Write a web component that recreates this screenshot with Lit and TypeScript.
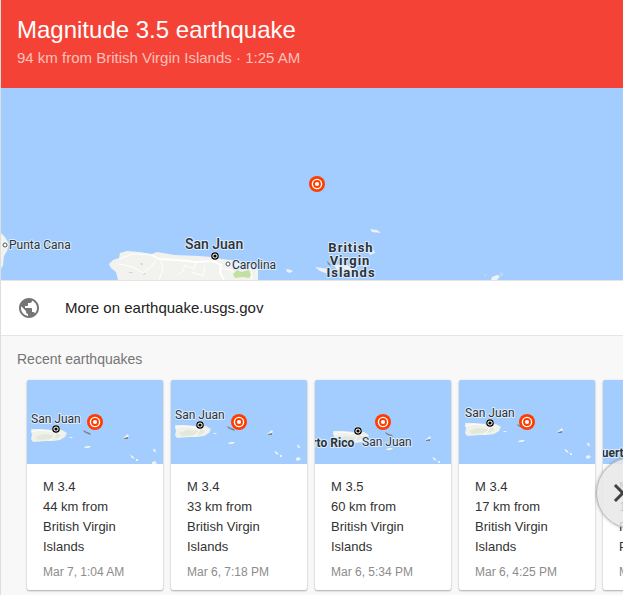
import { LitElement, html, css, svg } from "lit";
import { customElement, property } from "lit/decorators.js";

interface Quake {
  magnitude: string;
  distance: string;
  place: string;
  time: string;
  // Position of the island group and of the city label on the thumbnail.
  islandX: number;
  islandY: number;
  labelX: number;
  labelY: number;
  region: string;
  regionX: number;
  regionY: number;
}

const quakes: Quake[] = [
  { magnitude: "M 3.4", distance: "44 km from", place: "British Virgin Islands", time: "Mar 7, 1:04 AM", islandX: 28, islandY: 49, labelX: 4, labelY: 43, region: "", regionX: 0, regionY: 0 },
  { magnitude: "M 3.4", distance: "33 km from", place: "British Virgin Islands", time: "Mar 6, 7:18 PM", islandX: 28, islandY: 45, labelX: 4, labelY: 39, region: "", regionX: 0, regionY: 0 },
  { magnitude: "M 3.5", distance: "60 km from", place: "British Virgin Islands", time: "Mar 6, 5:34 PM", islandX: 42, islandY: 51, labelX: 47, labelY: 66, region: "Puerto Rico", regionX: -24, regionY: 67 },
  { magnitude: "M 3.4", distance: "17 km from", place: "British Virgin Islands", time: "Mar 6, 4:25 PM", islandX: 30, islandY: 43, labelX: 6, labelY: 37, region: "", regionX: 0, regionY: 0 },
  { magnitude: "M 3.0", distance: "16 km from", place: "Fajardo, Puerto Rico", time: "Mar 6, 2:10 PM", islandX: 90, islandY: 65, labelX: 70, labelY: 60, region: "Puerto Rico", regionX: -9, regionY: 77 },
];

const epicentre = (x: number, y: number) => svg`
  <g transform="translate(${x} ${y})">
    <circle r="8" fill="#ff3d00"></circle>
    <circle r="4.6" fill="none" stroke="#fff" stroke-width="1.4"></circle>
    <circle r="2.1" fill="#fff"></circle>
  </g>`;

const capital = (x: number, y: number) => svg`
  <g transform="translate(${x} ${y})">
    <circle r="4.2" fill="#f8f8f8"></circle>
    <circle r="3.2" fill="none" stroke="#000" stroke-width="1.2"></circle>
    <circle r="1.6" fill="#000"></circle>
  </g>`;

const mapText = css`
  svg {
    display: block;
    width: 100%;
  }
  text {
    font-family: Roboto, "Liberation Sans", sans-serif;
    fill: #2b333b;
    stroke: #dcebfb;
    stroke-width: 2px;
    stroke-linejoin: round;
    paint-order: stroke;
  }
`;

@customElement("quake-map")
export class QuakeMap extends LitElement {
  static styles = [
    mapText,
    css`
      :host {
        display: block;
        background: #a3ccff;
      }
      svg {
        height: 192px;
      }
      .city {
        font-size: 14px;
        font-weight: 500;
      }
      .town {
        font-size: 12px;
      }
      .region {
        font-size: 13px;
        font-weight: 700;
        letter-spacing: 1px;
        text-anchor: middle;
      }
    `,
  ];

  render() {
    return html`
      <svg viewBox="0 0 622 192" preserveAspectRatio="xMidYMid slice" role="img" aria-label="Map of the epicentre">
        <path d="M0 145L4 149L8 156L6 163L3 168L2 177L0 181Z" fill="#f2f2ef"></path>
        <path d="M117 192L115 184L110 180L108 176L112 172L118 170L119 165L126 163L139 164L151 166L156 164L174 167L198 168L210 169L221 171L239 173L250 176L257 180L257 192Z" fill="#f2f2ef"></path>
        <g fill="none" stroke="#fff">
          <path d="M151 167L158 171L176 172L196 174L212 173L220 177L219 184L223 192" stroke-width="2"></path>
          <path d="M119 171L131 166L151 167M118 176L132 179L142 185L150 179L155 172M160 173L162 181L158 192M196 173L193 181L184 177L182 183L176 187M204 178L202 188L190 184M218 180L230 182L238 190M250 178L251 192"></path>
        </g>
        <path d="M232 186L236 182L240 184L248 182L250 187L248 190L242 189L234 190Z" fill="#c1e0a1"></path>
        <path d="M139 176l2-1 1 2zM127 185l3-1 2 1zM142 186l3-1-2 2z" fill="#a3ccff"></path>
        <g fill="#edf2f4">
          <path d="M285 181L290 182L292 183L289 185L286 184Z"></path>
          <path d="M314 179L321 180L328 181L333 184L327 186L319 183Z"></path>
          <path d="M333 177L342 176L349 178L354 174L357 178L350 184L337 184Z"></path>
          <path d="M369 141L376 142L380 145L371 144ZM368 165l5-3 1 3-5 2z"></path>
          <path d="M490 192L491 189L496 187L499 188L497 191L496 192Z"></path>
          <path d="M482 186l5 1-3 2z M498 185l3-1 2 2-3 3z" fill="#b8d6fa"></path>
        </g>
        <path d="M326 173l3 3 1 2-3-2zM341 177l6 1M343 181l5 1-1 4-2-3z" fill="#767d80"></path>
        <path d="M335 182l4-2 1 4-4 1z" fill="#dce9b9"></path>
        <circle cx="4" cy="157" r="2" fill="#fff" stroke="#4b5763"></circle>
        <text class="town" x="8" y="161">Punta Cana</text>
        <text class="city" x="184" y="161">San Juan</text>
        ${capital(214, 168)}
        <circle cx="227" cy="176" r="2" fill="#fff" stroke="#4b5763"></circle>
        <text class="town" x="231" y="181">Carolina</text>
        <text class="region" x="350" y="164">British</text>
        <text class="region" x="349" y="177">Virgin</text>
        <text class="region" x="350" y="189">Islands</text>
        ${epicentre(316, 96)}
      </svg>
    `;
  }
}

@customElement("quake-card")
export class QuakeCard extends LitElement {
  static styles = [
    mapText,
    css`
      :host {
        display: block;
        flex: none;
        width: 136px;
        background: #fff;
        border-radius: 2px;
        box-shadow: 0 1px 2px rgba(0, 0, 0, 0.3), 0 0 1px rgba(0, 0, 0, 0.2);
        overflow: hidden;
      }
      svg {
        height: 84px;
        background: #a3ccff;
      }
      .city {
        font-size: 12px;
      }
      .region {
        font-size: 12px;
        font-weight: 700;
      }
      .body {
        display: flex;
        flex-direction: column;
        gap: 5px;
        padding: 13px 32px 8px 16px;
      }
      p {
        margin: 0;
        font-size: 13px;
        line-height: 20px;
        color: #333;
      }
      .line {
        display: block;
      }
      time {
        font-size: 12px;
        line-height: 20px;
        color: #8c8c8c;
        white-space: nowrap;
      }
    `,
  ];

  @property({ attribute: false }) quake!: Quake;

  render() {
    const q = this.quake;
    return html`
      <svg viewBox="0 0 136 84" preserveAspectRatio="xMidYMid slice" role="img" aria-label="Map thumbnail">
        <g transform="translate(${q.islandX} ${q.islandY})">
          <path d="M-24 0L-15 0L-3 1L7 1L12 4L10 8L5 11L-2 12L-9 12L-22 13L-24 10L-23 6Z" fill="#f0f1ea"></path>
          <path d="M-20 8l8-3 10 1 4-3 5 1-4 5-8 1-12 1z" fill="#e2e9db"></path>
          <path d="M-24 3l9-2 15 2 7 2M1 3l-2 5-5 4" fill="none" stroke="#fff"></path>
          <path d="M14 8h3l1 1h-3zM29 18l3-1h4l-2 2h-4zM68 9l5-4 1 2-4 3zM75 26l3 1 2 3-3-1zM81 30h2v2h-2zM98 20h2l1 3h-2zM97 33l3-1 2 2-3 2-2-1z" fill="#edf2f4"></path>
          <path d="M28 1l4 2 3 1 1 2-3-1-4-2zM69 9l4-1v2h-4z" fill="#78828a"></path>
        </g>
        ${q.region ? svg`<text class="region" x=${q.regionX} y=${q.regionY}>${q.region}</text>` : null}
        <text class="city" x=${q.labelX} y=${q.labelY}>San Juan</text>
        ${capital(q.islandX + 1, q.islandY)}
        ${epicentre(68, 42)}
      </svg>
      <div class="body">
        <p>
          <span class="line">${q.magnitude}</span>
          <span class="line">${q.distance}</span>
          <span class="line">${q.place}</span>
        </p>
        <time>${q.time}</time>
      </div>
    `;
  }
}

@customElement("app-root")
export class AppRoot extends LitElement {
  static styles = css`
    :host {
      display: block;
      box-sizing: border-box;
      min-height: 100vh;
      border-left: 1px solid #dedede;
      background: #f8f8f8;
      font-family: "Liberation Sans", Arial, sans-serif;
      overflow: hidden;
    }
    header {
      padding: 16px 16px 18px;
      background: #f44336;
      color: #fff;
    }
    h1 {
      margin: 0 0 2px;
      font-size: 24px;
      line-height: 28px;
      font-weight: 400;
    }
    .where {
      margin: 0;
      font-size: 15px;
      line-height: 24px;
      color: #fbc0bb;
    }
    .more {
      display: flex;
      align-items: center;
      gap: 24px;
      padding: 0 16px;
      height: 54px;
      border-top: 1px solid #e5e5e5;
      border-bottom: 1px solid #e5e5e5;
      margin-bottom: -1px;
      background: #fff;
      color: #222;
      font-size: 15px;
      text-decoration: none;
    }
    .more span {
      padding-bottom: 2px;
    }
    .more svg {
      width: 24px;
      height: 24px;
      fill: #757575;
    }
    h2 {
      margin: 0;
      padding: 14px 16px 10px;
      font-size: 14px;
      line-height: 20px;
      font-weight: 400;
      color: #757575;
    }
    .carousel {
      position: relative;
    }
    .cards {
      display: flex;
      gap: 8px;
      padding: 1px 26px 5px;
      overflow: hidden;
    }
    .next {
      position: absolute;
      top: 78px;
      right: -45px;
      display: flex;
      align-items: center;
      width: 72px;
      height: 72px;
      padding: 0 4px;
      border: 1px solid #b5b5b5;
      border-radius: 50%;
      background: rgba(232, 232, 232, 0.85);
      box-shadow: 0 0 3px rgba(0, 0, 0, 0.3);
      cursor: pointer;
    }
    .next svg {
      width: 36px;
      height: 36px;
      fill: #424242;
    }
  `;

  private scrollCards() {
    this.renderRoot.querySelector(".cards")?.scrollBy({ left: 432, behavior: "smooth" });
  }

  render() {
    return html`
      <header>
        <h1>Magnitude 3.5 earthquake</h1>
        <p class="where">94 km from British Virgin Islands · 1:25 AM</p>
      </header>
      <quake-map></quake-map>
      <a class="more" href="https://earthquake.usgs.gov">
        <svg viewBox="0 0 24 24" aria-hidden="true">
          <path d="M12 2C6.48 2 2 6.48 2 12s4.48 10 10 10 10-4.480 10-10S17.520 2 12 2zm-1 17.930c-3.950-.490-7-3.850-7-7.930 0-.620.080-1.210.210-1.790L9 15v1c0 1.100.900 2 2 2v1.930zm6.900-2.540c-.260-.810-1-1.390-1.900-1.390h-1v-3c0-.550-.450-1-1-1H8v-2h2c.550 0 1-.450 1-1V7h2c1.100 0 2-.900 2-2v-.410c2.930 1.190 5 4.060 5 7.410 0 2.080-.800 3.970-2.100 5.390z"></path>
        </svg>
        <span>More on earthquake.usgs.gov</span>
      </a>
      <section>
        <h2>Recent earthquakes</h2>
        <div class="carousel">
          <div class="cards">${quakes.map((q) => html`<quake-card .quake=${q}></quake-card>`)}</div>
          <button class="next" type="button" aria-label="Next" @click=${this.scrollCards}>
            <svg viewBox="0 0 24 24" aria-hidden="true">
              <path d="M8.590 16.590L13.170 12 8.590 7.410 10 6l6 6-6 6-1.410-1.410z"></path>
            </svg>
          </button>
        </div>
      </section>
    `;
  }
}
